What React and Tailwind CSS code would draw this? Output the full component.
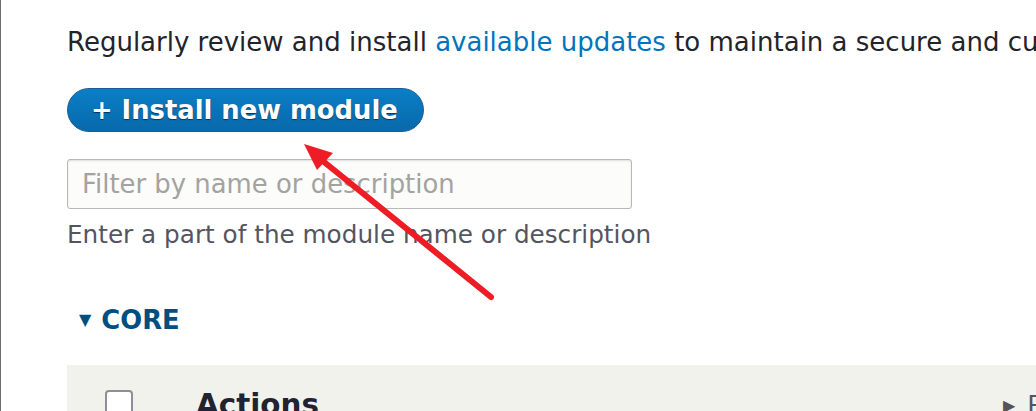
export default function App() {
  return (
    <div
      className="relative w-[1036px] h-[411px] overflow-hidden bg-white border-l border-[#6b6b6b]"
      style={{ fontFamily: '"DejaVu Sans", Verdana, sans-serif' }}
    >
      <div className="pl-[66px]">
        <p className="mt-[23px] text-[26px] leading-[38px] text-[#232429] whitespace-nowrap">
          Regularly review and install{" "}
          <a className="text-[#0074bd]">available updates</a> to maintain a secure and current site.
        </p>
        <button className="mt-[27px] h-[44px] pl-[23px] pr-[25px] rounded-full border border-[#1e5c90] bg-gradient-to-b from-[#0a7fc6] to-[#0869ab] text-white font-bold text-[25.8px] leading-[40px] [text-shadow:0_1px_1px_#0b3552] flex items-center whitespace-nowrap">
          + Install new module
        </button>
        <div className="mt-[27px] w-[565px] h-[50px] rounded-[3px] border border-[#b8b8b8] bg-[#fcfcfa] flex items-center pl-[14px] shadow-[inset_0_1px_2px_rgba(0,0,0,0.12)]">
          <span className="text-[25.9px] text-[#a3a3a0]">Filter by name or description</span>
        </div>
        <p className="mt-[7px] text-[24.7px] leading-[38px] text-[#545560] whitespace-nowrap">
          Enter a part of the module name or description
        </p>
        <div className="mt-[46px] flex items-center h-[40px] pl-[12px] text-[#004f80] font-bold whitespace-nowrap">
          <span className="text-[16px] mr-[10px] leading-none">▼</span>
          <span className="text-[25.8px]">CORE</span>
        </div>
        <div className="mt-[25px] h-[60px] bg-[#f2f2ed] flex items-start pt-[25px]">
          <div className="ml-[38px] w-[28px] h-[28px] rounded-[4px] border-[2px] border-[#8e8e99] bg-white shrink-0" />
          <span className="ml-[63px] -mt-[4px] text-[29.4px] font-bold text-[#222330] leading-[38px] whitespace-nowrap">
            Actions
          </span>
          <div className="flex-1" />
          <div className="w-[33px] shrink-0 flex items-center -mt-[5px] text-[25.6px] text-[#545560] whitespace-nowrap">
            <span className="text-[16px] mr-[12px] mt-[3px] text-[#555]">▶</span>
            <span>P</span>
          </div>
        </div>
      </div>
      <svg
        className="absolute left-0 top-0 pointer-events-none"
        width="1036"
        height="411"
        viewBox="0 0 1036 411"
      >
        <line
          x1="490"
          y1="297"
          x2="312"
          y2="153"
          stroke="#ee1c25"
          strokeWidth="6"
          strokeLinecap="round"
        />
        <polygon points="303,144 332,153 316,170" fill="#ee1c25" />
      </svg>
    </div>
  );
}
